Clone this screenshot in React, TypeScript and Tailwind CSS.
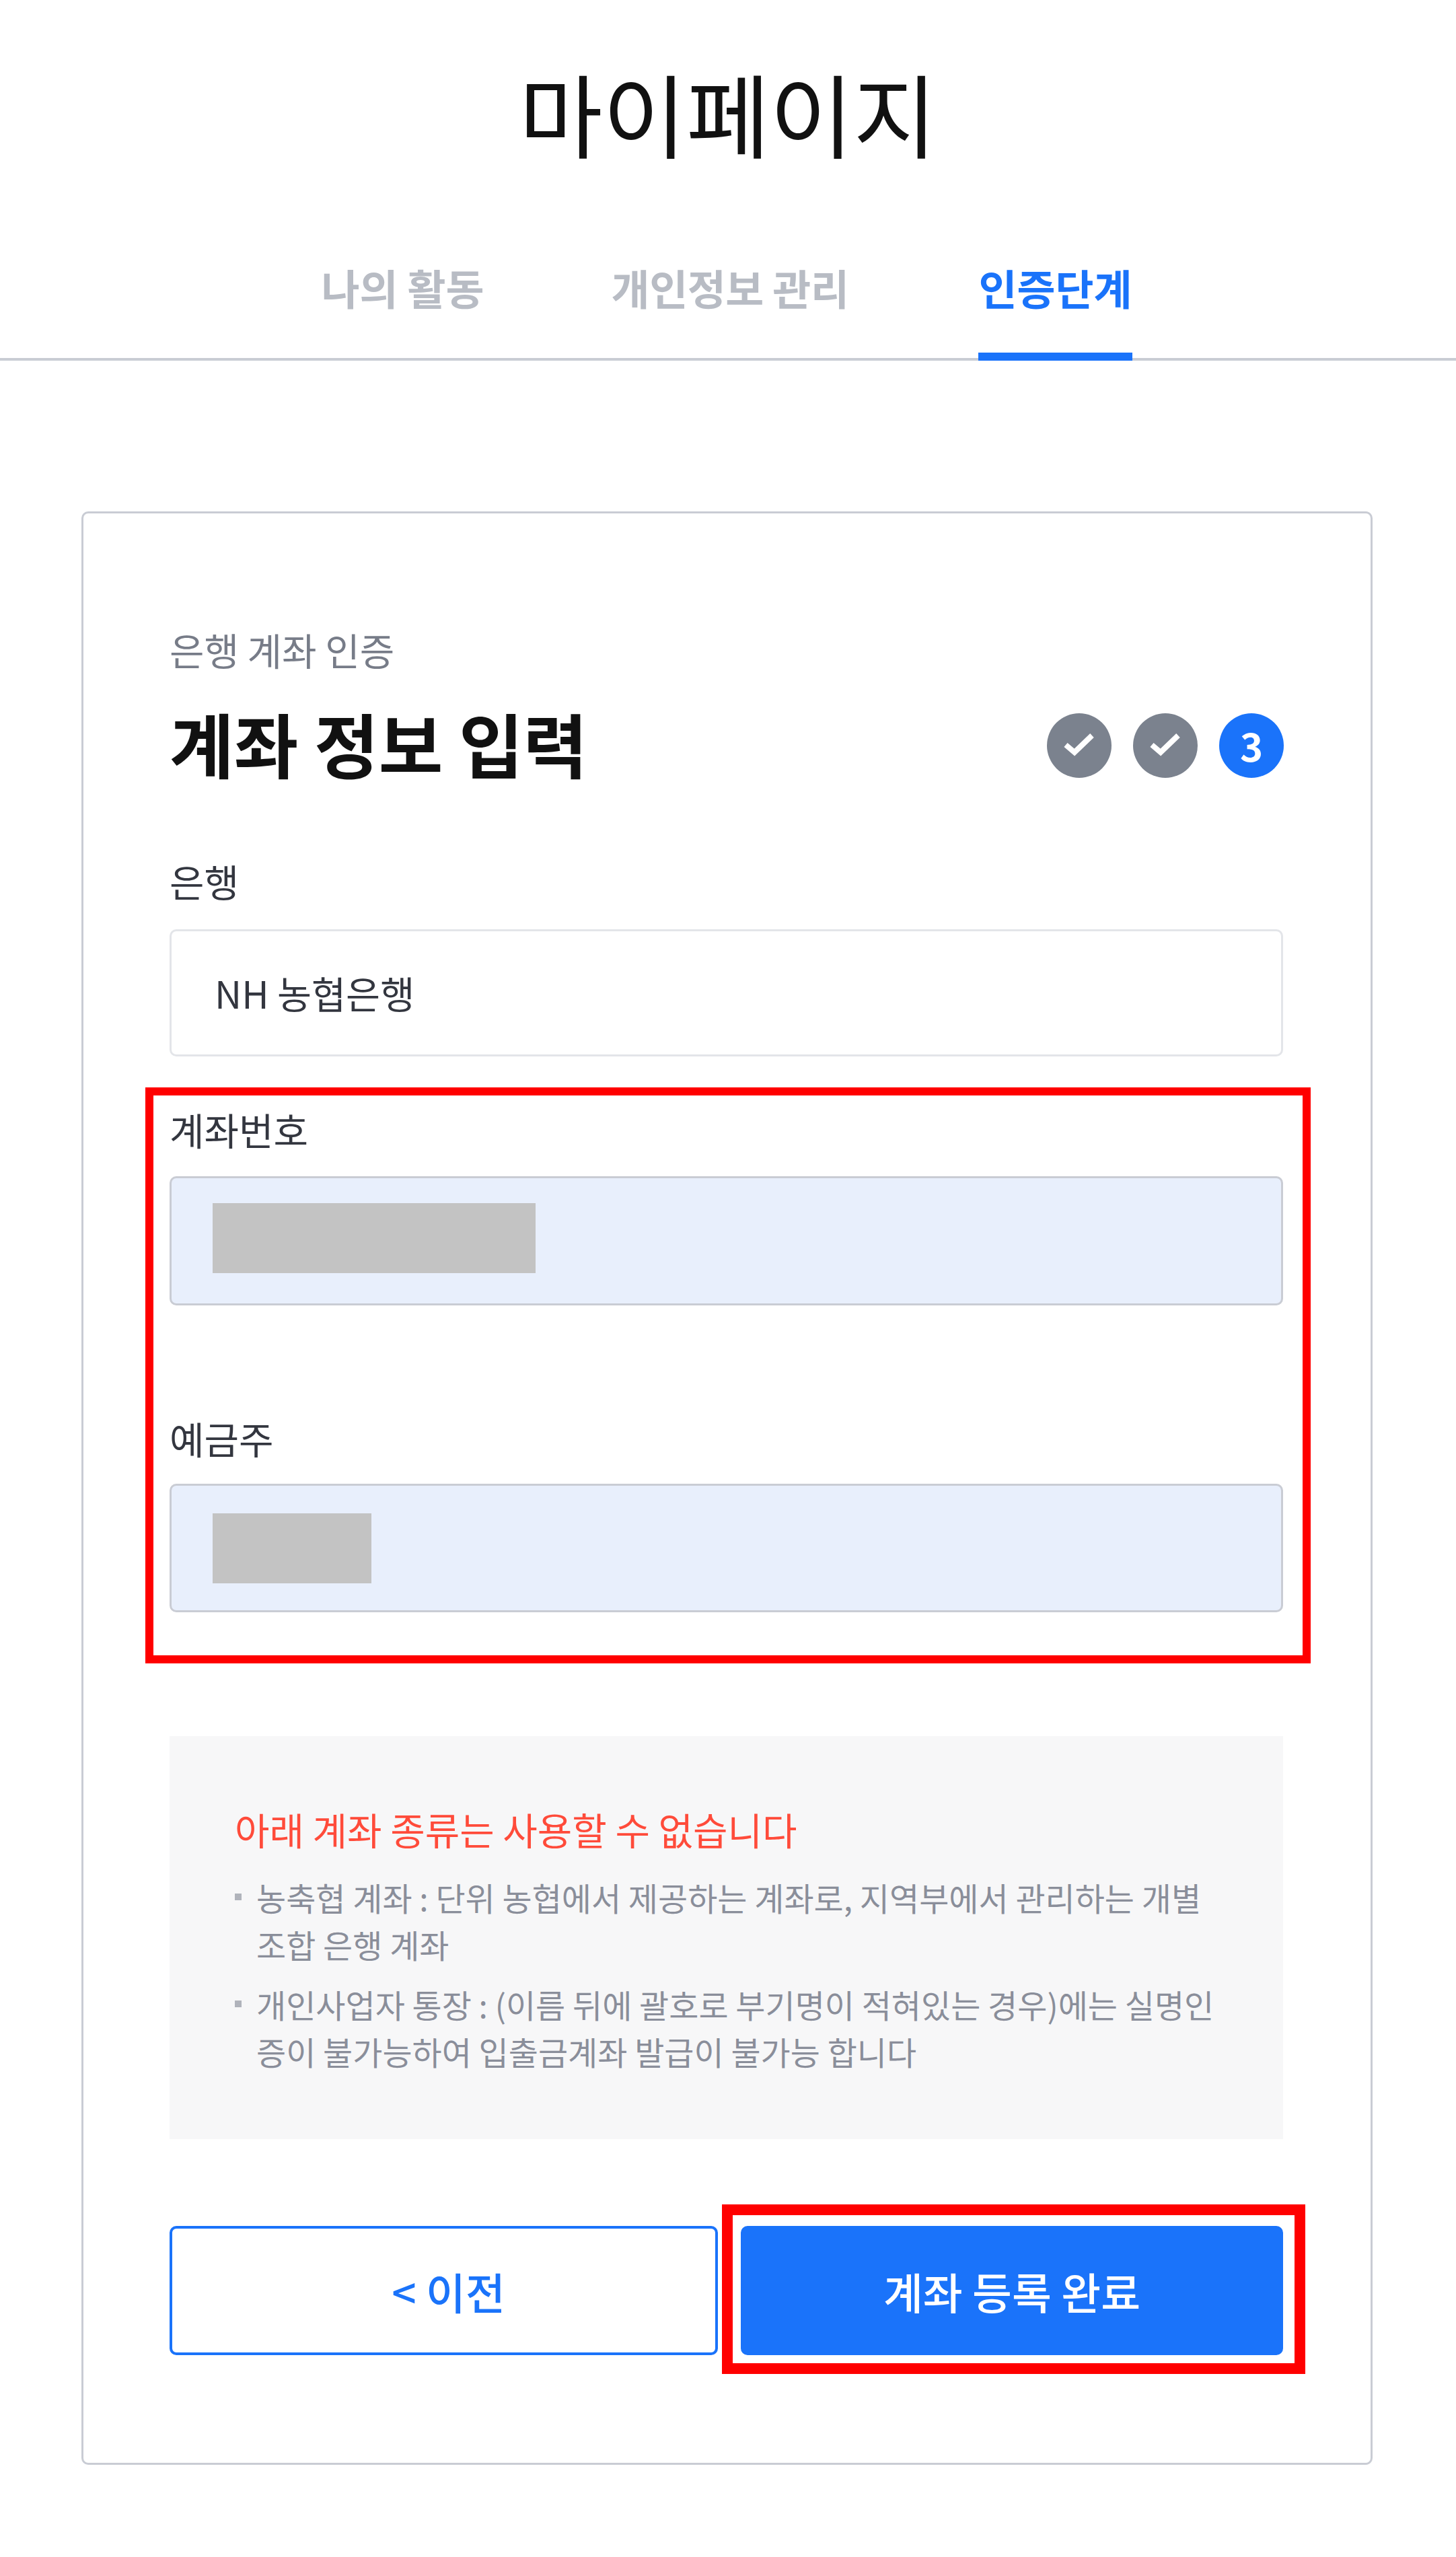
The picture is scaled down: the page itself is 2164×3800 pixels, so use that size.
const font = "font-['Noto_Sans_CJK_KR','Noto_Sans',sans-serif]";

function Check() {
  return (
    <div className="flex h-[96px] w-[96px] items-center justify-center rounded-full bg-[#7b828e]">
      <svg viewBox="0 0 96 96" className="h-[96px] w-[96px]" fill="none" stroke="#ffffff" strokeWidth="8">
        <path d="M28 47 L41 58 L67 33" />
      </svg>
    </div>
  );
}

function Field({ label, mb, children, className }: { label: string; mb: string; children: React.ReactNode; className: string }) {
  return (
    <div className={className}>
      <div className={`flex h-[72px] items-center text-[56px] leading-none text-[#33363f] ${mb}`}>{label}</div>
      {children}
    </div>
  );
}

export default function App() {
  return (
    <div className={`${font} h-[3800px] w-[2164px] bg-white`}>
      <header className="border-b-4 border-[#c9ccd4]">
        <h1 className="flex h-[340px] items-center justify-center pb-[8px] text-[135px] font-normal leading-none text-[#111111]">
          마이페이지
        </h1>
        <nav className="flex h-[192px] justify-center gap-[193px] pr-[4px] text-[62px] font-bold leading-none">
          <a className="-mr-[4px] flex h-[196px] items-start pt-[56px] text-[#b8bcc4]">나의 활동</a>
          <a className="flex h-[196px] items-start pt-[56px] tracking-[-0.5px] text-[#b8bcc4]">개인정보 관리</a>
          <a className="flex h-[196px] items-start border-b-[12px] border-[#1a73fa] pt-[56px] text-[#1a73fa]">인증단계</a>
        </nav>
      </header>

      <main className="ml-[121px] mt-[224px] box-border h-[2903px] w-[1919px] rounded-[10px] border-[3px] border-[#c9ccd4] pl-[128px] pr-[130px]">
        <div className="flex h-[287px] items-end text-[56px] leading-none text-[#777c88]">
          <span className="pb-[57px]">은행 계좌 인증</span>
        </div>
        <div className="flex h-[116px] items-center justify-between">
          <h2 className="pb-[8px] text-[104px] font-bold leading-none text-[#111111]">계좌 정보 입력</h2>
          <div className="-mr-px flex gap-[32px]">
            <Check />
            <Check />
            <div className="flex h-[96px] w-[96px] items-center justify-center rounded-full bg-[#1a73fa] pb-[2px] text-[58px] font-bold leading-none text-white">
              3
            </div>
          </div>
        </div>

        <Field label="은행" mb="mb-[36px]" className="mt-[107px]">
          <div className="box-border flex h-[189px] items-center rounded-[10px] border-[3px] border-[#e3e5e9] pl-[64px] text-[55.5px] leading-none text-[#33363f]">
            NH 농협은행
          </div>
        </Field>

        <div className="relative">
          <Field label="계좌번호" mb="mb-[34px]" className="pt-[72px]">
            <div className="box-border flex h-[192px] items-center rounded-[10px] border-[3px] border-[#c9ccd4] bg-[#e8effc] pb-[8px] pl-[61px]">
              <div className="h-[104px] w-[480px] bg-[#c3c3c3]" />
            </div>
          </Field>
          <Field label="예금주" mb="mb-[32px]" className="mt-[161px]">
            <div className="box-border flex h-[191px] items-center rounded-[10px] border-[3px] border-[#c9ccd4] bg-[#e8effc] pl-[61px]">
              <div className="h-[104px] w-[236px] bg-[#c3c3c3]" />
            </div>
          </Field>
          <div className="pointer-events-none absolute -left-[36px] -right-[41px] top-[46px] h-[856px] border-[12px] border-[#ff0000]" />
        </div>

        <section className="mt-[184px] box-border h-[599px] bg-[#f7f7f8] pl-[97px] pr-[80px] pt-[107px]">
          <p className="text-[56px] leading-[62px] text-[#ff4b3a]">아래 계좌 종류는 사용할 수 없습니다</p>
          <ul className="mt-[35px] text-[48px] leading-[70px] text-[#8a8e9a]">
            <li className="relative pl-[32px]">
              <span className="absolute left-0 top-[30px] h-[10px] w-[10px] bg-[#b0b3bb]" />
              농축협 계좌 : 단위 농협에서 제공하는 계좌로, 지역부에서 관리하는 개별 조합 은행 계좌
            </li>
            <li className="relative mt-[19px] pl-[32px]">
              <span className="absolute left-0 top-[30px] h-[10px] w-[10px] bg-[#b0b3bb]" />
              개인사업자 통장 : (이름 뒤에 괄호로 부기명이 적혀있는 경우)에는 실명인증이 불가능하여 입출금계좌 발급이 불가능 합니다
            </li>
          </ul>
        </section>

        <div className="relative mt-[129px] flex justify-between">
          <button className="box-border flex h-[192px] w-[815px] items-center justify-center rounded-[10px] border-[4px] border-[#1a73fa] bg-white pl-[14px] text-[64px] font-medium leading-none text-[#1a73fa]">
            &lt; 이전
          </button>
          <button className="flex h-[192px] w-[806px] items-center justify-center rounded-[10px] bg-[#1a73fa] text-[64px] font-medium leading-none text-white">
            계좌 등록 완료
          </button>
          <div className="pointer-events-none absolute -right-[33px] -top-[32px] h-[252px] w-[867px] border-[16px] border-[#ff0000]" />
        </div>
      </main>
    </div>
  );
}
